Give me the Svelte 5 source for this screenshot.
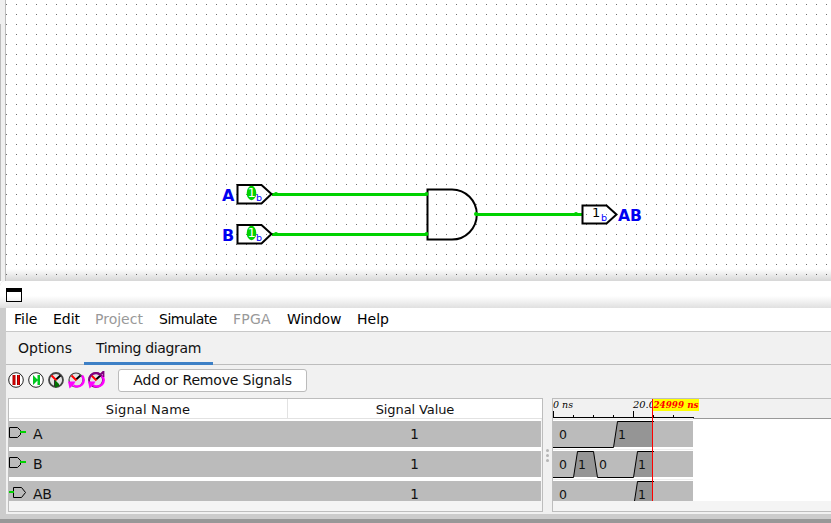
<script>
  const menus = [
    { label: 'File', width: 23 },
    { label: 'Edit', width: 26 },
    { label: 'Project', width: 48, disabled: true },
    { label: 'Simulate', width: 58, spacing: -0.5 },
    { label: 'FPGA', width: 38, disabled: true, spacing: 0.2 },
    { label: 'Window', width: 54, spacing: -0.15 },
    { label: 'Help', width: 31 }
  ];
  const signals = [
    { name: 'A', value: 1, kind: 'in' },
    { name: 'B', value: 1, kind: 'in' },
    { name: 'AB', value: 1, kind: 'out' }
  ];
  const inputs = [
    { name: 'A', y: 194 },
    { name: 'B', y: 234 }
  ];
  const ticks = [0, 20, 40, 60, 80, 100, 120];
  const tools = ['pause', 'step', 'clock', 'loop', 'run'];
</script>

<main>
  <section class="editor">
    <div class="gutter"></div>
    <svg class="circuit" width="825" height="281" viewBox="6 0 825 281">
      <defs>
        <pattern id="grid" width="10" height="10" patternUnits="userSpaceOnUse" x="6" y="4">
          <rect width="1" height="1" fill="#707070" />
        </pattern>
        <linearGradient id="shade" x2="0" y2="1">
          <stop offset="0" stop-color="#000" stop-opacity="0" />
          <stop offset="1" stop-color="#000" stop-opacity=".16" />
        </linearGradient>
      </defs>
      <rect x="6" y="0" width="825" height="281" fill="url(#grid)" shape-rendering="crispEdges" />
      {#each inputs as pin}
        <path d="M272 {pin.y + .5}H428" stroke="#00d200" stroke-width="3" />
        <circle cx="276" cy={pin.y} r="2" fill="#00d200" />
        <path d="M237.5 {pin.y - 9}H261.5L271.5 {pin.y}L261.5 {pin.y + 9.5}H237.5Z" fill="none" stroke="#000" stroke-width="2" />
        <ellipse cx="251.5" cy={pin.y - 1} rx="4.8" ry="7.2" fill="#00d200" />
        <text x="247.5" y={pin.y + 3} font-size="13" fill="#fff">1</text>
        <text x="256" y={pin.y + 7} font-size="9.5" fill="#00f">b</text>
        <text class="label" x="222" y={pin.y + 7}>{pin.name}</text>
      {/each}
      <path d="M427.5 189.5H452A24.8 25 0 0 1 452 239.5H427.5Z" fill="none" stroke="#000" stroke-width="2" />
      <path d="M476 214.5H582" stroke="#00d200" stroke-width="3" />
      <g fill="#00d200">
        <circle cx="426.5" cy="194" r="2" /><circle cx="426.5" cy="234" r="2" />
        <circle cx="476" cy="214" r="2" /><circle cx="576" cy="214" r="2" />
      </g>
      <path d="M582.5 205.5H606.5L616.5 214.5L606.5 223.5H582.5Z" fill="none" stroke="#000" stroke-width="2" />
      <text x="592" y="217" font-size="13">1</text>
      <text x="601" y="221" font-size="9.5" fill="#00f">b</text>
      <text class="label" x="618" y="221" textLength="24" lengthAdjust="spacingAndGlyphs">AB</text>
      <rect x="6" y="269" width="825" height="12" fill="url(#shade)" />
    </svg>
  </section>

  <section class="window">
    <header>
      <svg width="16" height="14" shape-rendering="crispEdges"><path fill="#000" fill-rule="evenodd" d="M0 0H16V14H0ZM1 4V13H15V4Z" /></svg>
    </header>
    <div class="body">
      <nav>
        {#each menus as m}
          <span class:disabled={m.disabled} style:width="{m.width}px" style:letter-spacing="{m.spacing ?? 0}px">{m.label}</span>
        {/each}
      </nav>
      <div class="tabs">
        <span class="tab">Options</span>
        <span class="tab active">Timing diagram</span>
      </div>
      <div class="toolbar">
        {#each tools as t}
          <svg width="18" height="18" viewBox="0 0 18 18">
            {#if t === 'pause' || t === 'step'}
              <circle cx="8" cy="9" r="7.3" fill="#fff" stroke="#222" />
            {:else}
              <circle cx="8" cy="9" r="7" fill="#e4e4e4" stroke={t === 'run' ? '#700070' : '#444'} stroke-width={t === 'loop' ? 1.2 : 1.8} />
            {/if}
            {#if t === 'pause'}
              <path d="M6 4V14M10.5 4V14" stroke="#a00000" stroke-width="3" />
              <path d="M6 4V14M10.5 4V14" stroke="#f00000" />
            {:else if t === 'step'}
              <path d="M5 4V14L9.5 9.5V14H12V4H9.5V8.5Z" fill="#00c820" />
            {:else}
              <path d="M8 8.5L12.5 4.5" stroke="#000" stroke-width="2" />
              <path d="M8.5 9.5L3.5 4.5" stroke="#f00" stroke-width="2" />
              {#if t === 'clock'}
                <path d="M7 9L11 13V15L7 16.5Z" fill="#007000" />
                <path d="M6.5 9V15.5" stroke="#333" />
              {:else}
                <path d="M14 4.5Q17.5 9 14 13.5Q10.5 17 5.5 14.5" fill="none" stroke="#f0f" stroke-width="2.4" />
                <path d="M0 10.5H7.5L5.5 14L1.5 17.5Z" fill="#f0f" />
                {#if t === 'run'}
                  <path d="M1.2 9Q1.5 2.5 8 2Q10.5 2 12 4L15.5 .5V6" fill="none" stroke="#80007f" stroke-width="1.8" />
                {/if}
              {/if}
            {/if}
          </svg>
        {/each}
        <button>Add or Remove Signals</button>
      </div>
      <div class="panes">
        <div class="table">
          <div class="thead"><span>Signal Name</span><span>Signal Value</span></div>
          <div class="rows">
            {#each signals as s}
              <div class="row">
                <div class="name">
                  <svg width="18" height="12" viewBox="0 0 18 12">
                    {#if s.kind === 'in'}
                      <path d="M.5 .5H8.5L11.5 3.5V7.5L8.5 10.5H.5Z" fill="none" stroke="#000" />
                      <path d="M11 5H17" stroke="#00d200" stroke-width="2" />
                    {:else}
                      <path d="M4.5 .5H12.5L16.5 5.5L12.5 10.5H4.5Z" fill="none" stroke="#000" />
                      <path d="M0 5H5" stroke="#00d200" stroke-width="2" />
                    {/if}
                  </svg>
                  <span>{s.name}</span>
                </div>
                <div class="value">{s.value}</div>
              </div>
            {/each}
          </div>
        </div>
        <div class="splitter"><i></i><i></i><i></i></div>
        <div class="timing">
          <svg width="278" height="112" viewBox="553 399 278 112">
            <rect x="553" y="399" width="278" height="19" fill="#f1f1f1" />
            <rect x="553" y="419" width="278" height="82" fill="#fff" />
            <g shape-rendering="crispEdges">
              <rect x="693" y="418" width="138" height="1" fill="#999" />
              <rect x="553" y="417" width="141" height="1" />
              {#each ticks as t}
                <rect x={553 + t} y={t % 80 ? 415 : 411} width="1" height={t % 80 ? 2 : 6} />
              {/each}
              <rect x="553" y="421" width="140" height="26" fill="#bbb" />
              <rect x="553" y="451" width="140" height="26" fill="#bbb" />
              <rect x="553" y="481" width="140" height="20" fill="#bbb" />
              <path d="M553 419H693V420H553ZM553 449H693V450H553ZM553 479H693V480H553Z" fill="#eee" />
            </g>
            <g fill="#959595">
              <path d="M613.5 447L617.5 421H653V447Z" />
              <path d="M573.5 477L577.5 451H593.5L597.5 477Z" />
              <path d="M633.5 477L637.5 451H653V477Z" />
              <path d="M634.5 501L637.5 481H653V501Z" />
            </g>
            <g fill="none" stroke="#000">
              <path d="M553 447.5H613.5L617.5 421.5H654" />
              <path d="M553 477.5H573.5L577.5 451.5H593.5L597.5 477.5H633.5L637.5 451.5H654" />
              <path d="M634.5 501L637.5 481.5H654" />
            </g>
            <g font-size="12.5" fill="#111">
              <text x="559" y="439">0</text><text x="618" y="439">1</text>
              <text x="559" y="469">0</text><text x="578" y="469">1</text><text x="599" y="469">0</text><text x="638" y="469">1</text>
              <text x="559" y="499">0</text><text x="638" y="499">1</text>
            </g>
            <g class="time">
              <text x="553" y="408" textLength="20" lengthAdjust="spacingAndGlyphs">0 ns</text>
              <text x="633" y="408" textLength="22" lengthAdjust="spacingAndGlyphs">20.0</text>
            </g>
            <rect x="653" y="399" width="46" height="12" fill="#ff0" />
            <text class="time now" x="653.5" y="408" textLength="45" lengthAdjust="spacingAndGlyphs">24999 ns</text>
            <rect x="652" y="399" width="1" height="102" fill="#f00" />
          </svg>
        </div>
      </div>
    </div>
  </section>
</main>

<style>
  main {
    width: 831px;
    height: 523px;
    overflow: hidden;
    display: flex;
    flex-direction: column;
    background: #fff;
    color: #111;
    font: 14px/16px "DejaVu Sans", sans-serif;
  }
  .editor { display: flex; height: 281px; flex: none; }
  .gutter {
    width: 6px;
    flex: none;
    box-sizing: border-box;
    border-right: 1px solid #bbb;
    background: linear-gradient(#bbb, #bbb) 0 24px / 1px 257px no-repeat, #f0f0f0;
  }
  svg { display: block; flex: none; }
  .label { font-size: 16px; font-weight: bold; fill: #0000f0; }
  .window { height: 238px; flex: none; background: #ccc; border-radius: 5px 0 0 0; border-bottom: 4px solid #989898; }
  header {
    height: 27px;
    box-sizing: border-box;
    padding: 7px 6px;
    border-radius: 5px 0 0 0;
    background: linear-gradient(#fff 0 15px, #e0e0e0);
  }
  .body { margin-left: 6px; height: 206px; background: #f1f1f1; }
  nav {
    height: 24px;
    box-sizing: border-box;
    border-bottom: 1px solid #c8c8c8;
    background: #fff;
    display: flex;
    gap: 16px;
    padding: 3px 8px;
    white-space: nowrap;
    color: #000;
  }
  .disabled { color: #999; }
  .tabs { height: 33px; box-sizing: border-box; border-bottom: 1px solid #bdbdbd; display: flex; }
  .tab { height: 33px; box-sizing: border-box; padding: 8px 12px; white-space: nowrap; }
  .tab:first-child { width: 78px; }
  .active { width: 129px; border-bottom: 3px solid #3d80c6; letter-spacing: -.36px; }
  .toolbar { height: 33px; display: flex; padding: 6px 2px 0; box-sizing: border-box; gap: 2px; }
  button {
    margin: -2px 0 0 10px;
    width: 189px;
    height: 23px;
    padding: 0 0 2px;
    border: 1px solid #bbb;
    border-radius: 3px;
    background: #fff;
    font: inherit;
    letter-spacing: -.16px;
    color: #111;
    white-space: nowrap;
  }
  .panes { display: flex; height: 114px; margin-left: 2px; }
  .table { width: 535px; box-sizing: border-box; border: 1px solid #bdbdbd; background: #f4f4f4; font-size: 13px; }
  .thead { display: flex; height: 20px; box-sizing: border-box; background: #fff; border-bottom: 1px solid #e2e2e2; text-align: center; line-height: 21px; }
  .thead span:first-child { width: 279px; box-sizing: border-box; border-right: 1px solid #e2e2e2; letter-spacing: .18px; }
  .thead span:last-child { flex: 1; letter-spacing: -.1px; }
  .rows { height: 82px; box-sizing: border-box; padding-top: 2px; overflow: hidden; background: #fff; display: flex; flex-direction: column; gap: 4px; width: 532px; }
  .row { flex: none; height: 26px; background: #bbb; display: flex; line-height: 26px; }
  .name { width: 279px; display: flex; font-size: 14px; letter-spacing: -.3px; line-height: 27px; }
  .name svg { margin-top: 6px; }
  .name span { margin-left: 6px; }
  .value { flex: 1; text-align: center; font-size: 13.5px; line-height: 27px; }
  .splitter { width: 9px; display: flex; flex-direction: column; align-items: center; justify-content: center; gap: 2px; }
  .splitter i { width: 3px; height: 3px; border-radius: 50%; background: #b5b5b5; }
  .timing { flex: 1; border: 1px solid #bdbdbd; border-right: 0; background: #f4f4f4; }
  .time { font: italic 9.5px "DejaVu Serif", serif; }
  .now { fill: #f00; font-weight: bold; }
</style>
